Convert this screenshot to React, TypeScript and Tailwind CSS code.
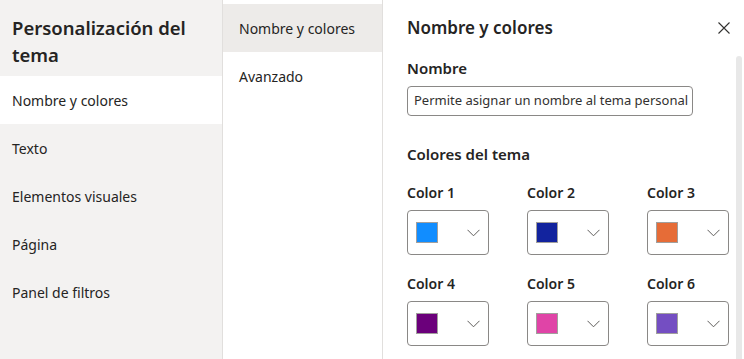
import React from 'react';

const leftItems = ['Nombre y colores', 'Texto', 'Elementos visuales', 'Página', 'Panel de filtros'];
const midItems = ['Nombre y colores', 'Avanzado'];

const themeColors = [
  { label: 'Color 1', hex: '#118dff' },
  { label: 'Color 2', hex: '#12239e' },
  { label: 'Color 3', hex: '#e66c37' },
  { label: 'Color 4', hex: '#6b007b' },
  { label: 'Color 5', hex: '#e044a7' },
  { label: 'Color 6', hex: '#744ec2' },
];

const Chevron = () => (
  <svg width="13" height="8" viewBox="0 0 13 8" fill="none">
    <path d="M0.5 0.8 L6.5 6.8 L12.5 0.8" stroke="#605e5c" strokeWidth="1" />
  </svg>
);

const ColorPicker: React.FC<{ label: string; hex: string }> = ({ label, hex }) => (
  <div className="flex flex-col">
    <span className="h-5 text-[14px] leading-5 font-semibold text-[#252423]">{label}</span>
    <div className="mt-[7px] flex h-[45px] w-[82px] items-center justify-between rounded border border-[#8a8886] pl-[8px] pr-[8px]">
      <span className="h-[21px] w-[22px] border border-[#a19f9d]" style={{ backgroundColor: hex }} />
      <Chevron />
    </div>
  </div>
);

const App: React.FC = () => {
  return (
    <div className="flex h-[359px] w-[744px] overflow-hidden bg-white text-[#252423] font-['Noto_Sans',sans-serif]">
      {/* panel de secciones */}
      <aside className="flex w-[223px] shrink-0 flex-col border-r border-[#e1dfdd] bg-[#f3f2f1]">
        <h1 className="mb-2 px-3 pt-[14px] text-[18.5px] leading-[27px] font-semibold">
          Personalización del tema
        </h1>
        {leftItems.map((item, i) => (
          <div
            key={item}
            className={`flex h-12 items-center px-3 text-[14px] ${i === 0 ? 'bg-white' : ''}`}
          >
            {item}
          </div>
        ))}
      </aside>

      {/* subsecciones */}
      <nav className="flex w-[160px] shrink-0 flex-col border-r border-[#e1dfdd] pt-1">
        {midItems.map((item, i) => (
          <div
            key={item}
            className={`flex h-12 items-center px-4 text-[14px] ${i === 0 ? 'bg-[#edebe9]' : ''}`}
          >
            {item}
          </div>
        ))}
      </nav>

      {/* contenido */}
      <section className="flex min-w-0 flex-1 flex-col">
        <header className="flex h-14 shrink-0 items-center justify-between pl-6 pr-[14px]">
          <h2 className="text-[17px] font-semibold">Nombre y colores</h2>
          <svg width="12" height="12" viewBox="0 0 12 12" fill="none">
            <path d="M0.5 0.5 L11.5 11.5 M11.5 0.5 L0.5 11.5" stroke="#323130" strokeWidth="1.1" />
          </svg>
        </header>
        <div className="flex min-h-0 flex-1">
          <div className="min-w-0 flex-1 overflow-hidden pl-6 pt-[2px]">
            <div className="h-5 text-[15px] leading-5 font-semibold">Nombre</div>
            <div className="mt-2 flex h-[30px] w-[286px] items-center overflow-hidden rounded-sm border border-[#8a8886] px-[6px]">
              <span className="whitespace-nowrap text-[13px] text-[#323130]">
                Permite asignar un nombre al tema personal
              </span>
            </div>
            <div className="mt-7 h-5 text-[15px] leading-5 font-semibold">Colores del tema</div>
            <div className="mt-[19px] grid grid-cols-[120px_120px_120px] gap-y-[19px]">
              {themeColors.map((c) => (
                <ColorPicker key={c.label} label={c.label} hex={c.hex} />
              ))}
            </div>
          </div>
          <div className="mr-[2px] w-[6px] shrink-0 rounded-t-full bg-[#e8e8e8]" />
        </div>
      </section>
    </div>
  );
};

export default App;
